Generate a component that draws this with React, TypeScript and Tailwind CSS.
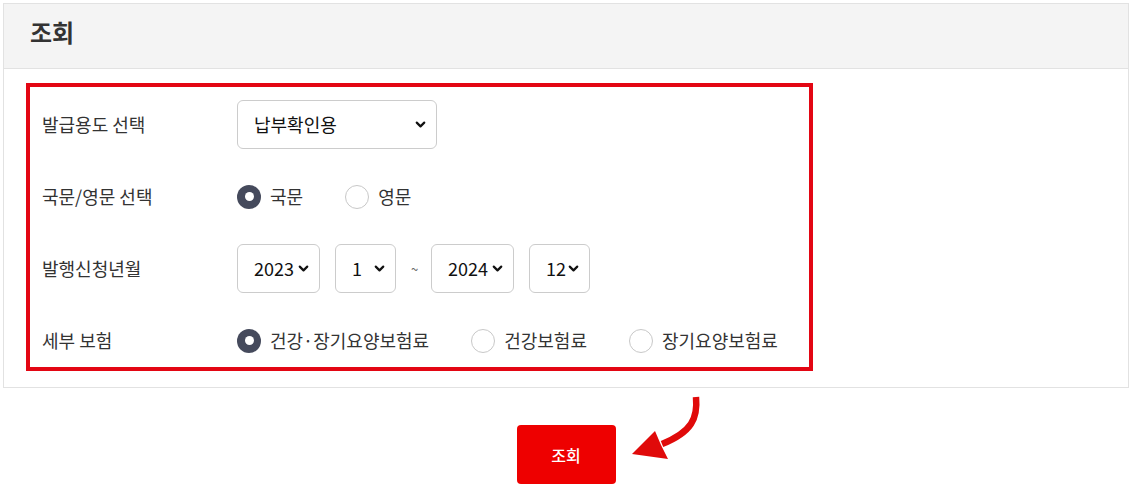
import { ChevronDown } from 'lucide-react';

const FONT = { fontFamily: '"Noto Sans CJK KR", "Noto Sans", sans-serif' };

function Select({ value, width, options }: { value: string; width: string; options: string[] }) {
  return (
    <div className={`relative h-[49px] ${width}`}>
      <select
        defaultValue={value}
        className="h-full w-full appearance-none rounded-md border border-[#cccccc] bg-white pl-4 text-[18px] text-[#111] outline-none"
      >
        {options.map(o => (
          <option key={o}>{o}</option>
        ))}
      </select>
      <ChevronDown size={15} strokeWidth={3.5} className="pointer-events-none absolute right-[9px] top-[17px] text-[#111]" />
    </div>
  );
}

function Radio({ label, checked }: { label: string; checked?: boolean }) {
  return (
    <label className="flex items-center gap-[9px] text-[18px] text-[#333]">
      {checked ? (
        <span className="flex h-6 w-6 items-center justify-center rounded-full bg-[#454a5c]">
          <span className="h-[9px] w-[9px] rounded-full bg-white" />
        </span>
      ) : (
        <span className="h-6 w-6 rounded-full border border-[#c8c8c8] bg-white" />
      )}
      {label}
    </label>
  );
}

function Row({ label, children }: { label: string; children: React.ReactNode }) {
  return (
    <div className="flex h-[49px] items-center">
      <div className="w-[207px] pl-3 text-[18px] text-[#333]">{label}</div>
      <div className="flex items-center">{children}</div>
    </div>
  );
}

export default function App() {
  return (
    <div className="relative min-h-[486px] bg-white pt-[3px]" style={FONT}>
      {/* Panel */}
      <div className="ml-[3px] w-[1126px] border border-[#e2e2e2]">
        <div className="flex h-[65px] items-center border-b border-[#e2e2e2] bg-[#f4f4f4] pb-[8px] pl-[26px]">
          <h2 className="text-[24px] font-bold text-[#333]">조회</h2>
        </div>
        <div className="px-[22px] pb-4 pt-[14px]">
          <div className="w-[787px] border-4 border-[#e30613] pb-[2px] pt-[13px]">
            <div className="flex flex-col gap-[23px]">
              <Row label="발급용도 선택">
                <Select value="납부확인용" width="w-[200px]" options={['납부확인용', '소득공제용']} />
              </Row>
              <Row label="국문/영문 선택">
                <div className="flex items-center gap-[42px]">
                  <Radio label="국문" checked />
                  <Radio label="영문" />
                </div>
              </Row>
              <Row label="발행신청년월">
                <div className="flex items-center gap-[15px]">
                  <Select value="2023" width="w-[83px]" options={['2023', '2024']} />
                  <Select value="1" width="w-[61px]" options={['1', '12']} />
                  <span className="w-[5px] text-center text-[13px] text-[#666]">~</span>
                  <Select value="2024" width="w-[83px]" options={['2023', '2024']} />
                  <Select value="12" width="w-[61px]" options={['1', '12']} />
                </div>
              </Row>
              <Row label="세부 보험">
                <div className="flex items-center gap-[42px]">
                  <Radio label="건강·장기요양보험료" checked />
                  <Radio label="건강보험료" />
                  <Radio label="장기요양보험료" />
                </div>
              </Row>
            </div>
          </div>
        </div>
      </div>

      {/* Submit */}
      <div className="ml-[3px] flex w-[1126px] justify-center pt-[37px]">
        <button className="h-[59px] w-[99px] rounded-[4px] bg-[#ee0000] text-[16px] font-medium text-white">조회</button>
      </div>

      {/* Annotation arrow */}
      <svg className="absolute left-[620px] top-[390px]" width="90" height="80" viewBox="0 0 90 80">
        <path d="M76 7 C78 28 72 42 42 54" fill="none" stroke="#e00a0a" strokeWidth="6.5" />
        <polygon points="12,64 35,41 41,55 48,69" fill="#e00a0a" />
      </svg>
    </div>
  );
}
